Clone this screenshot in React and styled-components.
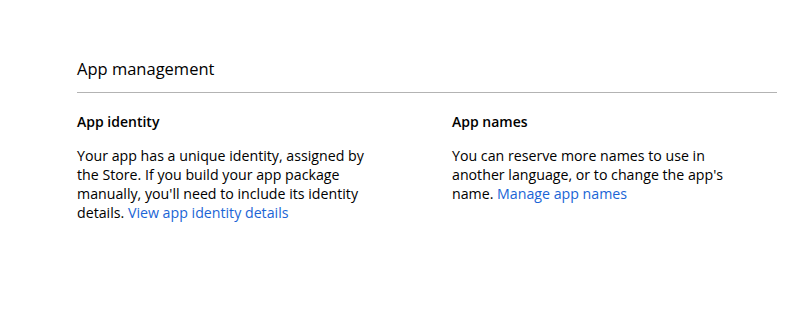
import React from "react";
import styled, { createGlobalStyle } from "styled-components";

const Global = createGlobalStyle`
  html, body { margin: 0; padding: 0; background: #fff; }
  body { font-family: "Open Sans", "Noto Sans", sans-serif; color: #000; }
`;

const Page = styled.div`
  padding: 57px 14px 0 77px;
`;

const Title = styled.h2`
  margin: 0;
  font-size: 16.5px;
  font-weight: 400;
  line-height: 24px;
  padding-bottom: 11px;
  border-bottom: 1px solid #b3b3b3;
`;

const Columns = styled.div`
  display: grid;
  grid-template-columns: 375px 1fr;
  padding-top: 19px;
`;

const Section = styled.section`
  width: 304px;
`;

const Heading = styled.h3`
  margin: 0 0 14px;
  font-size: 14px;
  font-weight: 600;
  line-height: 20px;
`;

const Body = styled.p`
  margin: 0;
  font-size: 14.2px;
  line-height: 19px;
`;

const Link = styled.a`
  color: #1a65d6;
  text-decoration: none;
`;

export default function App() {
  return (
    <>
      <Global />
      <Page>
        <Title>App management</Title>
        <Columns>
          <Section>
            <Heading>App identity</Heading>
            <Body>
              Your app has a unique identity, assigned by the Store. If you build
              your app package manually, you'll need to include its identity
              details. <Link href="#">View app identity details</Link>
            </Body>
          </Section>
          <Section>
            <Heading>App names</Heading>
            <Body>
              You can reserve more names to use in another language, or to change
              the app's name. <Link href="#">Manage app names</Link>
            </Body>
          </Section>
        </Columns>
      </Page>
    </>
  );
}
